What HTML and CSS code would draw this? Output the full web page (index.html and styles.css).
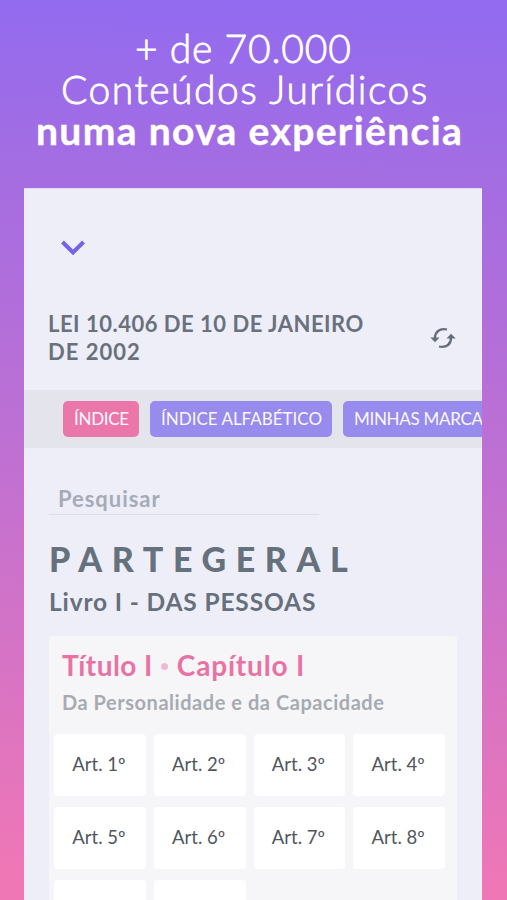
FILE: index.html
```html
<!DOCTYPE html>
<html lang="pt-BR">
<head>
<meta charset="utf-8">
<title>Conteúdos Jurídicos</title>
<link rel="stylesheet" href="styles.css">
</head>
<body>
<main class="poster">
  <h1 class="headline">
    <span class="line line-count">+ de 70.000</span>
    <span class="line line-subject">Conteúdos Jurídicos</span>
    <strong class="line line-strong">numa nova experiência</strong>
  </h1>
  <section class="screen">
    <div class="back">
      <svg width="26" height="18" viewBox="0 0 26 18" fill="none" stroke="#7562eb" stroke-width="4"><path d="M2.500 3 13 13.400 23.500 3"/></svg>
    </div>
    <header class="law">
      <h2 class="law-title"><span class="law-a">LEI 10.406 DE 10 DE JANEIRO</span><br><span class="law-b">DE 2002</span></h2>
      <svg class="sync" width="26" height="22" viewBox="0 0 26 22"><g fill="none" stroke="#656d79" stroke-width="2.3"><path d="M5 12C4.600 5 9.500 .800 17 2.500"/><path d="M21 10C21.400 17 16.500 21.200 9 19.500"/></g><path fill="#656d79" d="M.3 10.500H9.500L5 15.200ZM16.500 11.500H25.700L21 6.800Z"/></svg>
    </header>
    <nav class="tabs">
      <a class="tab tab-index">ÍNDICE</a>
      <a class="tab tab-alpha">ÍNDICE ALFABÉTICO</a>
      <a class="tab tab-marks">MINHAS MARCAÇÕES</a>
    </nav>
    <div class="content">
      <div class="search"><span>Pesquisar</span></div>
      <h2 class="part">PARTEGERAL</h2>
      <h3 class="book">Livro I - DAS PESSOAS</h3>
      <section class="chapter">
        <h3 class="chapter-title"><span class="chapter-a">Título I</span><i class="dot"></i><span class="chapter-b">Capítulo I</span></h3>
        <p class="chapter-sub">Da Personalidade e da Capacidade</p>
        <div class="articles">
          <a class="article">Art. 1º</a><a class="article">Art. 2º</a><a class="article">Art. 3º</a><a class="article">Art. 4º</a>
          <a class="article">Art. 5º</a><a class="article">Art. 6º</a><a class="article">Art. 7º</a><a class="article">Art. 8º</a>
          <a class="article"></a><a class="article"></a>
        </div>
      </section>
    </div>
  </section>
</main>
</body>
</html>
```
FILE: styles.css
```css
* { box-sizing: border-box; margin: 0; padding: 0; }
body { font-family: Lato, "Open Sans", sans-serif; overflow: hidden; }
.poster {
  height: 900px;
  overflow: hidden;
  padding: 28px 25px 0 24px;
  background: linear-gradient(182deg, #926bf0 1%, #a56de1 21%, #c070d2 52%, #f077b5 98%);
}
.headline { height: 160px; color: #fff; font-weight: 300; }
.line { display: block; line-height: 41px; font-size: 39px; white-space: nowrap; width: max-content; }
.line-count { margin-left: 111px; letter-spacing: .8px; -webkit-text-stroke: .8px #fff; }
.line-subject { margin-left: 37px; letter-spacing: 1.5px; -webkit-text-stroke: .8px #fff; }
.line-strong { margin-left: 12px; font-weight: 700; letter-spacing: 1.35px; -webkit-text-stroke: .4px #fff; }
.screen { height: 712px; background: #eeeef8; overflow: hidden; border: solid #e2d8f6; border-width: 1px 0 0; }
.back { height: 121px; padding: 50px 0 0 36px; }
.back svg { display: block; }
.law { display: flex; justify-content: space-between; height: 80px; padding: 0 26px 0 24px; }
.law-title { font-size: 22px; line-height: 28px; color: #69717d; white-space: nowrap; }
.law-a { letter-spacing: .5px; }
.law-b { letter-spacing: 1px; }
.sync { margin-top: 17px; }
.tabs { display: flex; gap: 11px; height: 58px; padding: 11px 0 0 39px; background: #e4e5ec; }
.tab { flex: none; height: 36px; line-height: 35px; border-radius: 5px; padding-left: 11px; background: #978bed; color: #fbf8ff; font-size: 17px; white-space: nowrap; }
.tab-index { width: 76px; letter-spacing: -.3px; background: #eb76aa; }
.tab-alpha { width: 182px; }
.tab-marks { width: 190px; letter-spacing: -.3px; }
.content { padding: 35px 25px 0; }
.search { width: 270px; height: 32px; padding-left: 9px; border-bottom: 1px solid #dddfe8; color: #a5abb7; font-size: 22px; line-height: 32px; font-weight: 700; letter-spacing: .95px; }
.part { margin-top: 24px; font-size: 34px; line-height: 40px; letter-spacing: 9.6px; font-weight: 900; color: #65717c; white-space: nowrap; }
.book { margin-top: 8px; font-size: 24.5px; line-height: 30px; letter-spacing: .85px; color: #65707c; white-space: nowrap; }
.chapter { height: 300px; margin-top: 19px; padding: 13px 12px 0 5px; background: #f6f6f9; border-radius: 3px; }
.chapter-title { display: flex; align-items: center; padding-left: 8px; height: 32px; font-size: 28px; color: #e873a3; white-space: nowrap; }
.chapter-a { letter-spacing: .45px; }
.chapter-b { letter-spacing: .8px; }
.dot { width: 7px; height: 7px; margin: 3px 9px 0 8px; border-radius: 50%; background: #f0b9d3; }
.chapter-sub { padding-left: 8px; margin-top: 8px; height: 26px; line-height: 26px; font-size: 20px; font-weight: 700; letter-spacing: .54px; color: #a6abb2; white-space: nowrap; }
.articles { display: grid; grid-template-columns: repeat(4, 1fr); grid-auto-rows: 62px; gap: 11px 8px; margin-top: 19px; }
.article { display: flex; align-items: center; justify-content: center; padding: 0 2px 3px 0; border-radius: 4px; background: #fff; color: #51565e; font-size: 18.5px; }
```
